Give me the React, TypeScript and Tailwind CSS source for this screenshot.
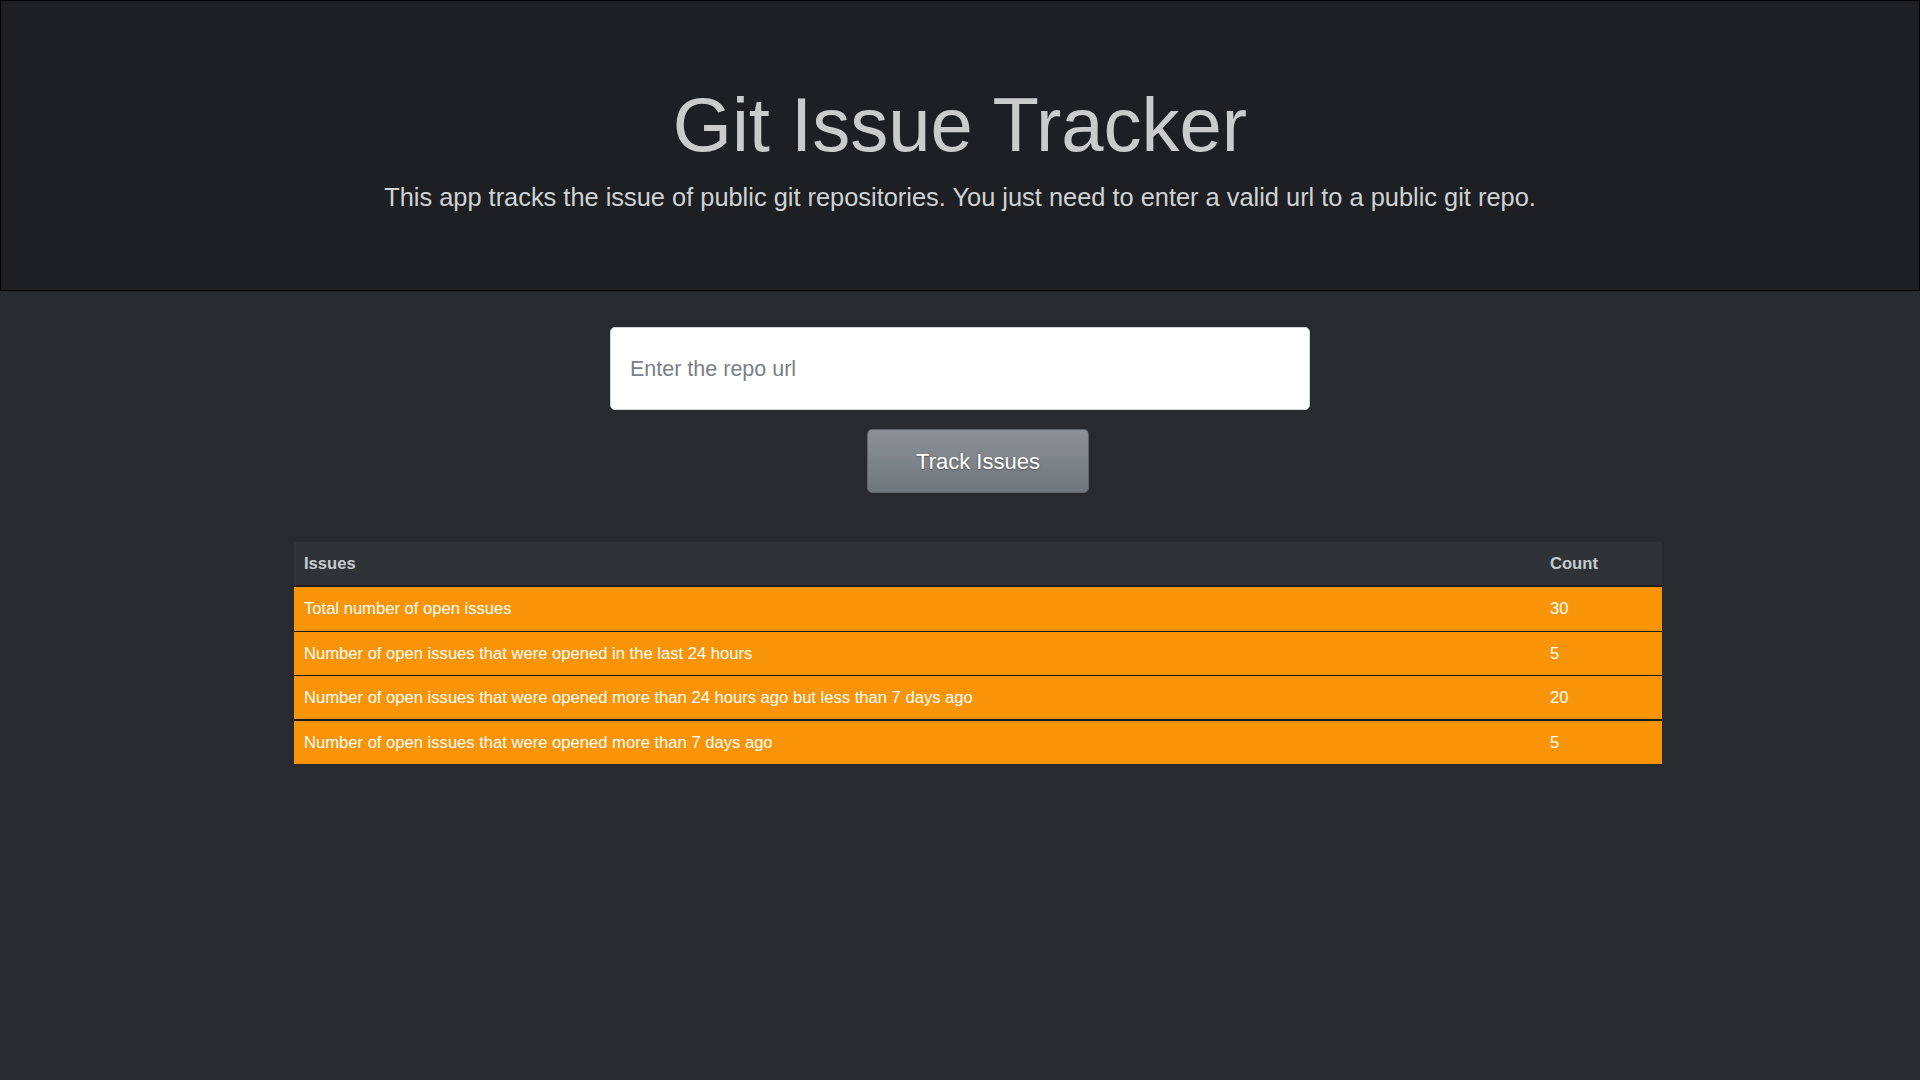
import React from 'react';

const rows = [
  { label: 'Total number of open issues', count: 30, border: 'border-t-2' },
  { label: 'Number of open issues that were opened in the last 24 hours', count: 5, border: 'border-t' },
  { label: 'Number of open issues that were opened more than 24 hours ago but less than 7 days ago', count: 20, border: 'border-t' },
  { label: 'Number of open issues that were opened more than 7 days ago', count: 5, border: 'border-t-2' },
];

export default function App() {
  return (
    <div className="min-h-screen bg-[#272a2f] font-['Liberation_Sans',Arial,sans-serif]">
      {/* Jumbotron */}
      <header className="h-[291px] border border-black bg-[#1e1f23] flex flex-col items-center pt-[86px]">
        <h1 className="text-[76px] leading-none font-light text-[#cbcbcb]">Git Issue Tracker</h1>
        <p className="mt-[19px] text-[25.4px] leading-[30px] text-[#cfd3d6]">
          This app tracks the issue of public git repositories. You just need to enter a valid url to a public git repo.
        </p>
      </header>

      <main className="flex flex-col items-center pt-[36px]">
        <input
          type="text"
          placeholder="Enter the repo url"
          className="w-[700px] h-[83px] rounded-[5px] border border-[#ced4da] bg-white px-[19px] pt-[2px] text-[21.5px] text-[#495057] placeholder:text-[#7a8087] outline-none"
        />

        <button className="ml-[36px] mt-[19px] w-[222px] h-[64px] rounded-[5px] border border-[#5f656a] bg-gradient-to-b from-[#8b9196] to-[#70777c] text-[22px] text-white [text-shadow:0_1px_2px_rgba(0,0,0,0.35)]">
          Track Issues
        </button>

        {/* Issues table */}
        <div className="ml-[36px] mt-[49px] w-[1368px] text-[16.6px]">
          <div className="flex h-[43px] items-center pt-[2px] bg-[#2f3338] font-bold text-[#c7cbcf]">
            <div className="flex-1 px-[10px]">Issues</div>
            <div className="w-[122px] px-[10px]">Count</div>
          </div>
          {rows.map((row, i) => (
            <div
              key={i}
              className={`flex items-center pt-[1px] bg-[#f89406] text-white border-[#1c1d20] ${row.border} ${i === 0 ? 'h-[46px]' : row.border === 'border-t-2' ? 'h-[45px]' : 'h-[44px]'}`}
            >
              <div className="flex-1 px-[10px]">{row.label}</div>
              <div className="w-[122px] px-[10px]">{row.count}</div>
            </div>
          ))}
        </div>
      </main>
    </div>
  );
}
